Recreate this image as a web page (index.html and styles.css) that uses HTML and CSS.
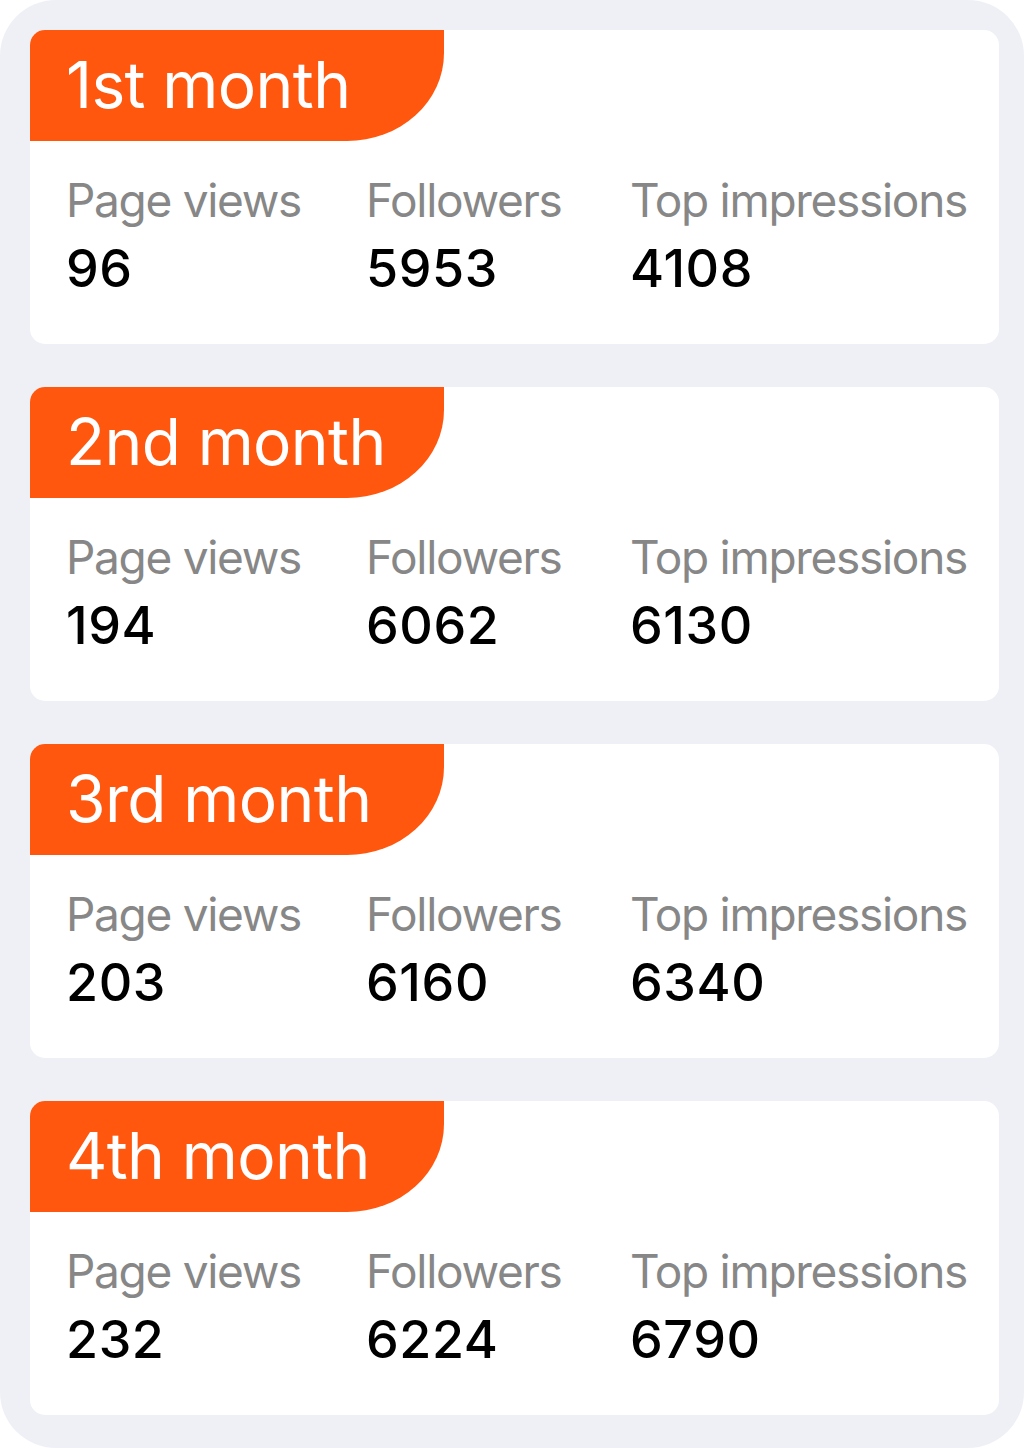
FILE: index.html
```html
<!DOCTYPE html>
<html lang="en">
<head>
<meta charset="utf-8">
<title>Monthly stats</title>
<link rel="stylesheet" href="styles.css">
</head>
<body>
<div class="panel">
  <section class="card">
    <div class="tab">1st month</div>
    <div class="stats">
      <div class="stat"><div class="label">Page views</div><div class="value">96</div></div>
      <div class="stat"><div class="label">Followers</div><div class="value">5953</div></div>
      <div class="stat"><div class="label">Top impressions</div><div class="value">4108</div></div>
    </div>
  </section>
  <section class="card">
    <div class="tab">2nd month</div>
    <div class="stats">
      <div class="stat"><div class="label">Page views</div><div class="value">194</div></div>
      <div class="stat"><div class="label">Followers</div><div class="value">6062</div></div>
      <div class="stat"><div class="label">Top impressions</div><div class="value">6130</div></div>
    </div>
  </section>
  <section class="card">
    <div class="tab">3rd month</div>
    <div class="stats">
      <div class="stat"><div class="label">Page views</div><div class="value">203</div></div>
      <div class="stat"><div class="label">Followers</div><div class="value">6160</div></div>
      <div class="stat"><div class="label">Top impressions</div><div class="value">6340</div></div>
    </div>
  </section>
  <section class="card">
    <div class="tab">4th month</div>
    <div class="stats">
      <div class="stat"><div class="label">Page views</div><div class="value">232</div></div>
      <div class="stat"><div class="label">Followers</div><div class="value">6224</div></div>
      <div class="stat"><div class="label">Top impressions</div><div class="value">6790</div></div>
    </div>
  </section>
</div>
</body>
</html>
```
FILE: styles.css
```css
html, body {
  margin: 0;
  padding: 0;
  background: #ffffff;
}
body {
  font-family: Inter, "Noto Sans", "Liberation Sans", sans-serif;
}
.panel {
  box-sizing: border-box;
  width: 1024px;
  height: 1448px;
  background: #eff0f5;
  border-radius: 56px;
  padding: 30px 25px 32px 30px;
  display: flex;
  flex-direction: column;
  gap: 43px;
}
.card {
  background: #ffffff;
  border-radius: 15px;
  height: 314px;
  display: flex;
  flex-direction: column;
}
.tab {
  box-sizing: border-box;
  width: 414px;
  height: 111px;
  background: #ff570e;
  color: #ffffff;
  border-radius: 15px 0 97px 0 / 15px 0 88px 0;
  font-size: 64px;
  font-weight: 400;
  line-height: 109px;
  padding-left: 36px;
  letter-spacing: -0.6px;
}
.stats {
  display: grid;
  grid-template-columns: 300px 264px 1fr;
  padding: 29px 0 0 36px;
}
.label {
  font-size: 46px;
  line-height: 60px;
  color: #878787;
  letter-spacing: -1.3px;
}
.value {
  margin-top: 3px;
  font-size: 52px;
  line-height: 72px;
  color: #000000;
  font-weight: 450;
  letter-spacing: 0.6px;
}
```
